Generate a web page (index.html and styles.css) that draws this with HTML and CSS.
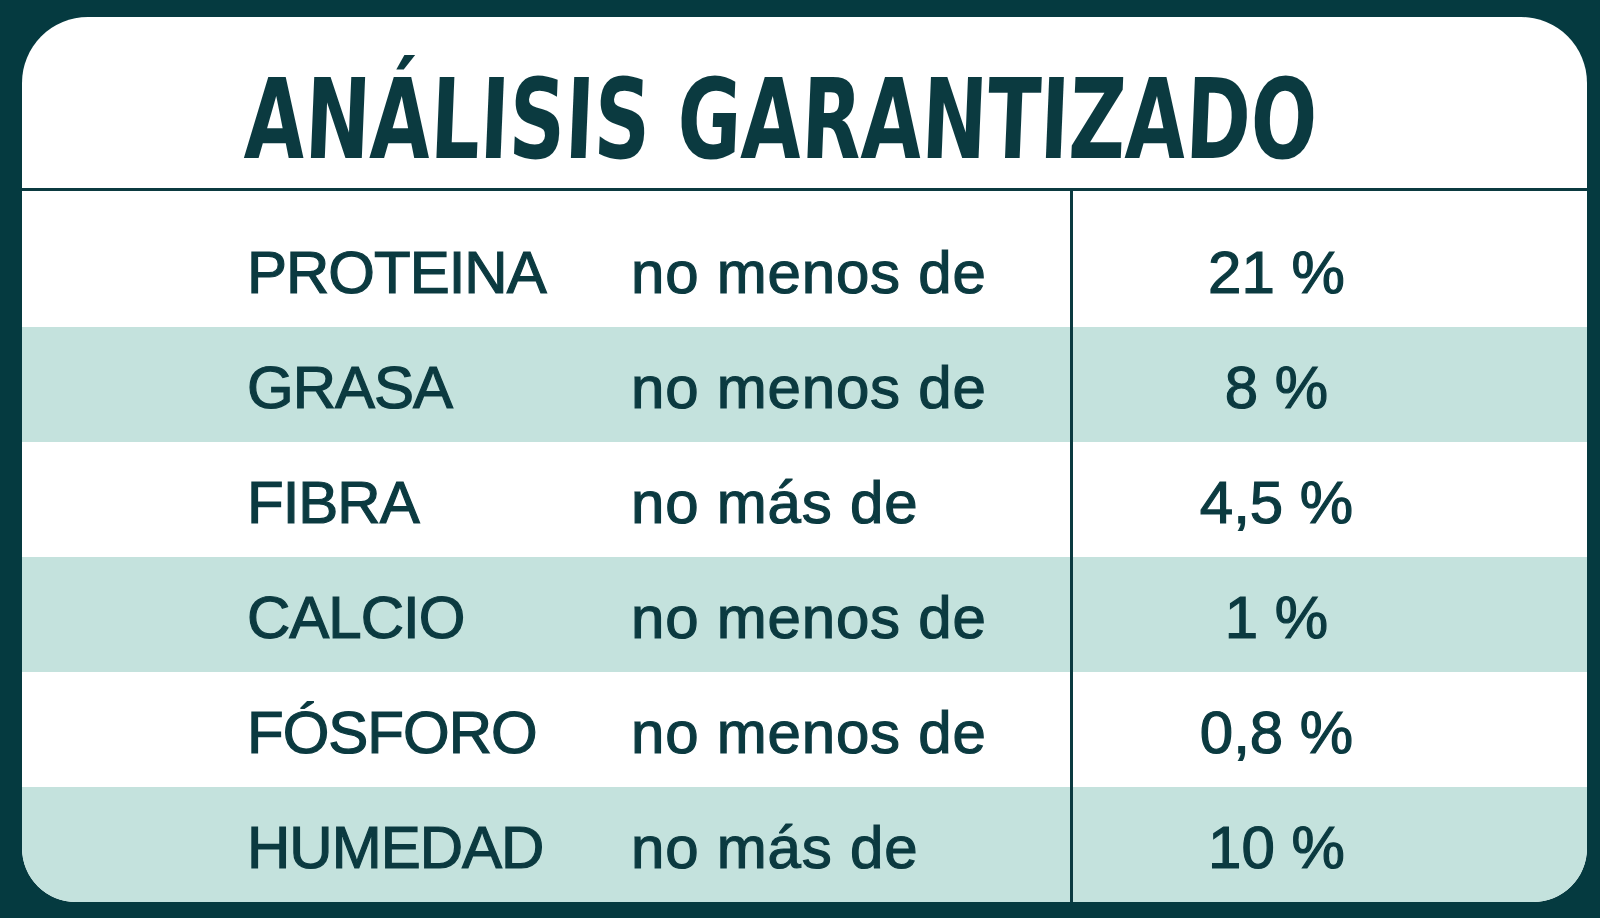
FILE: index.html
```html
<!DOCTYPE html>
<html lang="es">
<head>
<meta charset="utf-8">
<title>Análisis garantizado</title>
<link rel="stylesheet" href="styles.css">
</head>
<body>
<div class="card">
  <div class="header">
    <h1 class="title">ANÁLISIS GARANTIZADO</h1>
  </div>
  <div class="table">
    <div class="row first">
      <div class="cell label">PROTEINA</div>
      <div class="cell qual">no menos de</div>
      <div class="cell value">21 %</div>
    </div>
    <div class="row alt">
      <div class="cell label">GRASA</div>
      <div class="cell qual">no menos de</div>
      <div class="cell value">8 %</div>
    </div>
    <div class="row">
      <div class="cell label">FIBRA</div>
      <div class="cell qual">no más de</div>
      <div class="cell value">4,5 %</div>
    </div>
    <div class="row alt">
      <div class="cell label">CALCIO</div>
      <div class="cell qual">no menos de</div>
      <div class="cell value">1 %</div>
    </div>
    <div class="row">
      <div class="cell label">FÓSFORO</div>
      <div class="cell qual">no menos de</div>
      <div class="cell value">0,8 %</div>
    </div>
    <div class="row alt">
      <div class="cell label">HUMEDAD</div>
      <div class="cell qual">no más de</div>
      <div class="cell value">10 %</div>
    </div>
  </div>
</div>
</body>
</html>
```
FILE: styles.css
```css
* { box-sizing: border-box; }

html, body {
  margin: 0;
  padding: 0;
  background: #053a40;
  width: 1600px;
  height: 918px;
  overflow: hidden;
}

body {
  padding: 17px 13px 16px 22px;
  color: #0b3a40;
  font-family: "Liberation Sans", Arial, sans-serif;
}

.card {
  width: 1565px;
  height: 885px;
  background: #ffffff;
  border-radius: 66px 66px 54px 54px;
  overflow: hidden;
  display: flex;
  flex-direction: column;
}

.header {
  height: 174px;
  flex: none;
  padding: 47px 0 0 223px;
  border-bottom: 3px solid #0b3a40;
}

.title {
  margin: 0;
  display: inline-block;
  font-family: "DejaVu Sans Condensed", "DejaVu Sans", sans-serif;
  font-stretch: condensed;
  font-weight: 700;
  font-size: 111px;
  line-height: 111px;
  white-space: nowrap;
  color: #0b3a40;
  transform-origin: left center;
  transform: scaleX(0.78) skewX(-3deg);
}

.table {
  flex: 1;
  display: flex;
  flex-direction: column;
}

.row {
  height: 115px;
  display: grid;
  grid-template-columns: 609px 439px 1fr;
  flex: none;
}

.row.first {
  height: 136px;
}

.row.alt {
  background: #c4e2dd;
}

.cell {
  display: flex;
  align-items: center;
  padding-top: 6px;
  font-size: 60px;
  line-height: 1;
  white-space: nowrap;
  -webkit-text-stroke: 1.2px #0b3a40;
}

.row.first .cell {
  padding-top: 27px;
}

.label {
  padding-left: 225px;
  letter-spacing: -1px;
}

.qual {
  letter-spacing: 0.8px;
}

.value {
  border-left: 3px solid #0b3a40;
  justify-content: center;
  padding-right: 107px;
}
```
